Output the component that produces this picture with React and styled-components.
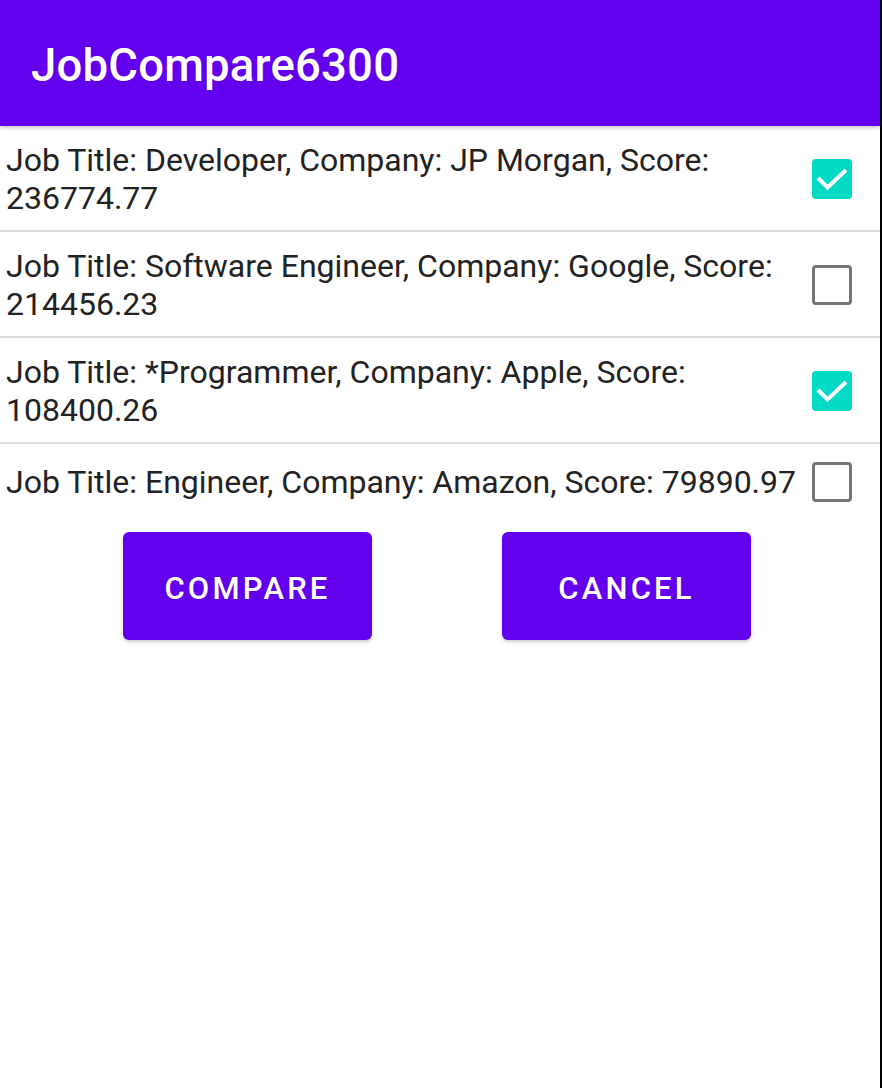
import React from 'react';
import styled, { createGlobalStyle } from 'styled-components';

const GlobalStyle = createGlobalStyle`
  html, body {
    margin: 0;
    padding: 0;
    background: #fff;
  }
  body {
    font-family: Roboto, "Noto Sans", sans-serif;
  }
`;

const Screen = styled.div`
  box-sizing: border-box;
  width: 882px;
  min-height: 100vh;
  background: #fff;
  border-right: 2px solid #000;
  display: flex;
  flex-direction: column;
`;

const AppBar = styled.header`
  height: 126px;
  background: #6200ee;
  display: flex;
  align-items: center;
  padding-left: 31px;
  padding-top: 4px;
  box-sizing: border-box;
  box-shadow: 0 2px 4px rgba(0, 0, 0, 0.22);
  position: relative;
  z-index: 1;
`;

const Title = styled.h1`
  margin: 0;
  color: #fff;
  font-family: Roboto, sans-serif;
  font-weight: 500;
  font-size: 45.5px;
  letter-spacing: 0.2px;
`;

const List = styled.div`
  display: flex;
  flex-direction: column;
`;

const Row = styled.div`
  display: flex;
  align-items: center;
  padding: 15px 28px 13px 6px;
  border-bottom: ${({ $last }) => ($last ? 'none' : '2px solid #e0e0e0')};
`;

const RowText = styled.div`
  flex: 1;
  font-size: 32px;
  line-height: 38px;
  color: #222;
`;

const BoxWrap = styled.div`
  height: 46px;
  margin-left: 6px;
  display: flex;
  align-items: center;
`;

const Box = styled.div`
  box-sizing: border-box;
  width: 40px;
  height: 40px;
  border-radius: 4px;
  background: ${({ $checked }) => ($checked ? '#03dac5' : 'transparent')};
  border: ${({ $checked }) => ($checked ? 'none' : '3.5px solid #757575')};
  display: flex;
  align-items: center;
  justify-content: center;
`;

const Buttons = styled.div`
  display: flex;
  gap: 130px;
  padding-left: 123px;
  margin-top: 14px;
`;

const Button = styled.button`
  width: 249px;
  height: 108px;
  padding-top: 6px;
  border: none;
  border-radius: 6px;
  background: #6200ee;
  color: #fff;
  font-family: Roboto, sans-serif;
  font-weight: 500;
  font-size: 31px;
  letter-spacing: 3.2px;
  text-transform: uppercase;
  box-shadow: 0 2px 3px rgba(0, 0, 0, 0.2);
`;

const jobs = [
  { text: 'Job Title: Developer, Company: JP Morgan, Score: 236774.77', checked: true },
  { text: 'Job Title: Software Engineer, Company: Google, Score: 214456.23', checked: false },
  { text: 'Job Title: *Programmer, Company: Apple, Score: 108400.26', checked: true },
  { text: 'Job Title: Engineer, Company: Amazon, Score: 79890.97', checked: false },
];

const CheckBox = ({ checked }) => (
  <BoxWrap>
    <Box $checked={checked}>
      {checked && (
        <svg width="40" height="40" viewBox="0 0 40 40">
          <path d="M6 19 L15.5 28.5 L34 11" fill="none" stroke="#fff" strokeWidth="4" />
        </svg>
      )}
    </Box>
  </BoxWrap>
);

export default function App() {
  return (
    <>
      <GlobalStyle />
      <Screen>
        <AppBar>
          <Title>JobCompare6300</Title>
        </AppBar>
        <List>
          {jobs.map((job, i) => (
            <Row key={job.text} $last={i === jobs.length - 1}>
              <RowText>{job.text}</RowText>
              <CheckBox checked={job.checked} />
            </Row>
          ))}
        </List>
        <Buttons>
          <Button>Compare</Button>
          <Button>Cancel</Button>
        </Buttons>
      </Screen>
    </>
  );
}
